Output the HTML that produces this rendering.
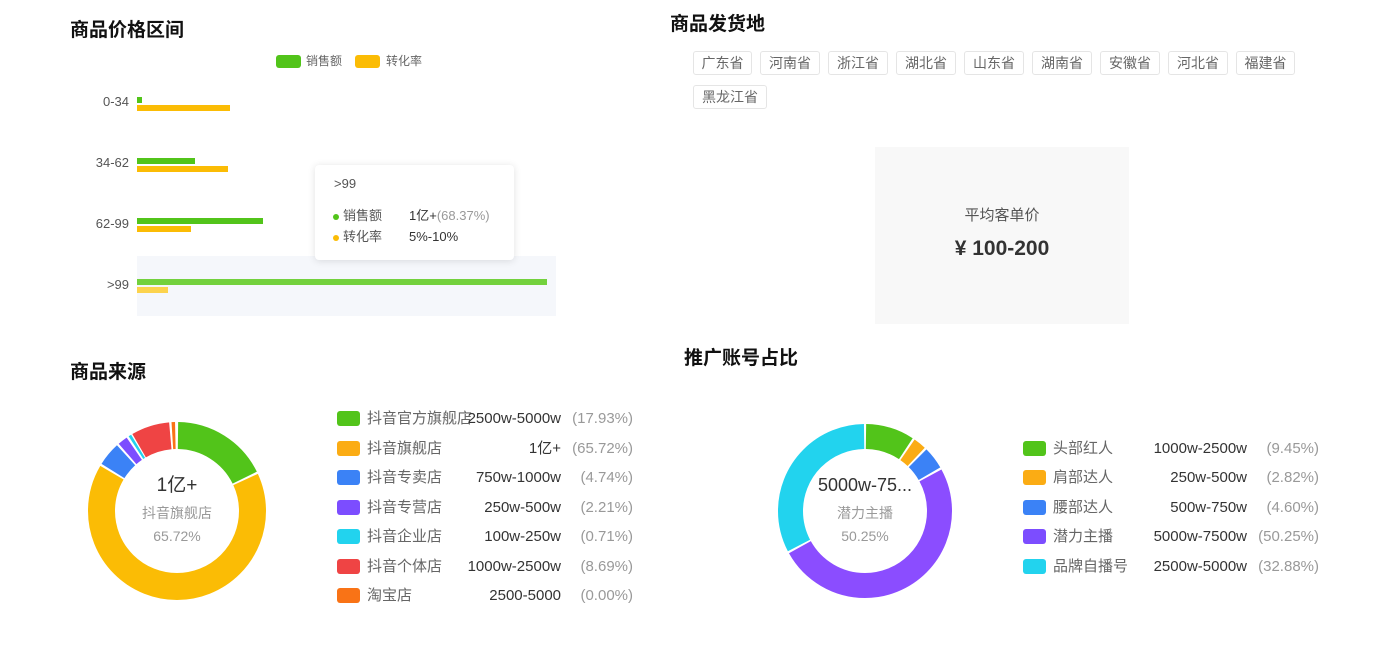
<!DOCTYPE html>
<html><head><meta charset="utf-8"><style>
body{margin:0;width:1382px;height:656px;background:#fff;font-family:"Liberation Sans","Noto Sans CJK SC",sans-serif;position:relative;overflow:hidden;color:#333}
.a{position:absolute;white-space:nowrap;line-height:20px}
.t{font-size:19px;font-weight:bold;color:#111;line-height:24px}
.tag{position:absolute;height:24px;line-height:22px;border:1px solid #e5e5e5;border-radius:3px;font-size:14px;color:#666;text-align:center;box-sizing:border-box}
.lab{font-size:13px;color:#555;text-align:right;width:60px}
.bar{position:absolute;height:6px}
.sw{position:absolute;width:23px;height:15px;border-radius:3px}
.ln,.lv,.lp{position:absolute;font-size:15px;line-height:20px;white-space:nowrap}
.ln{color:#666}
.lv{color:#333;text-align:right}
.lp{color:#999;text-align:right}
</style></head><body>
<div class="a t" style="left:70px;top:19px">商品价格区间</div>
<div class="a t" style="left:670px;top:13px">商品发货地</div>
<div class="a t" style="left:70px;top:361px">商品来源</div>
<div class="a t" style="left:684px;top:347px">推广账号占比</div>

<div class="a" style="left:276px;top:55px;width:25px;height:13px;background:#52c41a;border-radius:3px"></div>
<div class="a" style="left:306px;top:51px;font-size:12px;color:#666">销售额</div>
<div class="a" style="left:355px;top:55px;width:25px;height:13px;background:#fbbc05;border-radius:3px"></div>
<div class="a" style="left:386px;top:51px;font-size:12px;color:#666">转化率</div>

<div class="a" style="left:137px;top:256px;width:419px;height:60px;background:#f5f7fb"></div>
<div class="a lab" style="left:69px;top:92px">0-34</div>
<div class="a lab" style="left:69px;top:153px">34-62</div>
<div class="a lab" style="left:69px;top:214px">62-99</div>
<div class="a lab" style="left:69px;top:275px">&gt;99</div>
<div class="bar" style="left:137px;top:97px;width:5px;background:#52c41a"></div>
<div class="bar" style="left:137px;top:105px;width:93px;background:#fbbc05"></div>
<div class="bar" style="left:137px;top:158px;width:58px;background:#52c41a"></div>
<div class="bar" style="left:137px;top:166px;width:91px;background:#fbbc05"></div>
<div class="bar" style="left:137px;top:218px;width:126px;background:#52c41a"></div>
<div class="bar" style="left:137px;top:226px;width:54px;background:#fbbc05"></div>
<div class="bar" style="left:137px;top:279px;width:410px;background:#73d13d"></div>
<div class="bar" style="left:137px;top:287px;width:31px;background:#fcd34d"></div>

<div class="a" style="left:315px;top:165px;width:199px;height:95px;background:#fff;border-radius:4px;box-shadow:0 1px 8px rgba(0,0,0,.12)">
<div class="a" style="left:19px;top:9px;font-size:13px;color:#555">&gt;99</div>
<div class="a" style="left:18px;top:49px;width:6px;height:6px;border-radius:3px;background:#52c41a"></div>
<div class="a" style="left:28px;top:41px;font-size:13px;color:#555">销售额</div>
<div class="a" style="left:94px;top:41px;font-size:13px;color:#333">1亿+<span style="color:#999">(68.37%)</span></div>
<div class="a" style="left:18px;top:70px;width:6px;height:6px;border-radius:3px;background:#fbbc05"></div>
<div class="a" style="left:28px;top:62px;font-size:13px;color:#555">转化率</div>
<div class="a" style="left:94px;top:62px;font-size:13px;color:#333">5%-10%</div>
</div>

<div class="tag" style="left:693px;top:51px;width:59px">广东省</div>
<div class="tag" style="left:760px;top:51px;width:60px">河南省</div>
<div class="tag" style="left:828px;top:51px;width:60px">浙江省</div>
<div class="tag" style="left:896px;top:51px;width:60px">湖北省</div>
<div class="tag" style="left:964px;top:51px;width:60px">山东省</div>
<div class="tag" style="left:1032px;top:51px;width:60px">湖南省</div>
<div class="tag" style="left:1100px;top:51px;width:60px">安徽省</div>
<div class="tag" style="left:1168px;top:51px;width:60px">河北省</div>
<div class="tag" style="left:1236px;top:51px;width:59px">福建省</div>
<div class="tag" style="left:693px;top:85px;width:74px">黑龙江省</div>

<div class="a" style="left:875px;top:147px;width:254px;height:177px;background:#f8f8f8"></div>
<div class="a" style="left:875px;top:206px;width:254px;text-align:center;font-size:15px;color:#555">平均客单价</div>
<div class="a" style="left:875px;top:239px;width:254px;text-align:center;font-size:21px;font-weight:bold;color:#333">¥ 100-200</div>

<svg class="a" style="left:0;top:0" width="1382" height="656">
<g transform="rotate(-90 177 511)" fill="none" stroke-width="27">
<circle cx="177" cy="511" r="75.5" stroke="#52c41a" stroke-dasharray="83 1000" stroke-dashoffset="-1"/>
<circle cx="177" cy="511" r="75.5" stroke="#fbbc05" stroke-dasharray="309.8 1000" stroke-dashoffset="-86"/>
<circle cx="177" cy="511" r="75.5" stroke="#3b82f6" stroke-dasharray="20.5 1000" stroke-dashoffset="-397.8"/>
<circle cx="177" cy="511" r="75.5" stroke="#7c4dff" stroke-dasharray="8.5 1000" stroke-dashoffset="-420.3"/>
<circle cx="177" cy="511" r="75.5" stroke="#22d3ee" stroke-dasharray="2.5 1000" stroke-dashoffset="-430.8"/>
<circle cx="177" cy="511" r="75.5" stroke="#ef4444" stroke-dasharray="33 1000" stroke-dashoffset="-434.5"/>
<circle cx="177" cy="511" r="75.5" stroke="#f97316" stroke-dasharray="3 1000" stroke-dashoffset="-469.5"/>
</g>
<g transform="rotate(-90 865 511)" fill="none" stroke-width="25">
<circle cx="865" cy="511" r="74.5" stroke="#52c41a" stroke-dasharray="42.2 1000" stroke-dashoffset="-1"/>
<circle cx="865" cy="511" r="74.5" stroke="#fbac14" stroke-dasharray="11.2 1000" stroke-dashoffset="-45.2"/>
<circle cx="865" cy="511" r="74.5" stroke="#3b82f6" stroke-dasharray="19.5 1000" stroke-dashoffset="-58.4"/>
<circle cx="865" cy="511" r="74.5" stroke="#8b4dff" stroke-dasharray="233.2 1000" stroke-dashoffset="-79.9"/>
<circle cx="865" cy="511" r="74.5" stroke="#22d3ee" stroke-dasharray="151.9 1000" stroke-dashoffset="-315.1"/>
</g>
</svg>
<div class="a" style="left:97px;top:476px;width:160px;text-align:center;font-size:19px;color:#333">1亿+</div>
<div class="a" style="left:97px;top:503px;width:160px;text-align:center;font-size:14px;color:#999">抖音旗舰店</div>
<div class="a" style="left:97px;top:526px;width:160px;text-align:center;font-size:14px;color:#999">65.72%</div>
<div class="a" style="left:785px;top:475px;width:160px;text-align:center;font-size:18px;color:#333">5000w-75...</div>
<div class="a" style="left:785px;top:503px;width:160px;text-align:center;font-size:14px;color:#999">潜力主播</div>
<div class="a" style="left:785px;top:526px;width:160px;text-align:center;font-size:14px;color:#999">50.25%</div>

<div class="sw" style="left:337px;top:411px;background:#52c41a"></div><div class="ln" style="left:367px;top:409px">抖音官方旗舰店</div><div class="lv" style="left:441px;top:409px;width:120px">2500w-5000w</div><div class="lp" style="left:553px;top:409px;width:80px">(17.93%)</div>
<div class="sw" style="left:337px;top:441px;background:#fbac14"></div><div class="ln" style="left:367px;top:439px">抖音旗舰店</div><div class="lv" style="left:441px;top:439px;width:120px">1亿+</div><div class="lp" style="left:553px;top:439px;width:80px">(65.72%)</div>
<div class="sw" style="left:337px;top:470px;background:#3b82f6"></div><div class="ln" style="left:367px;top:468px">抖音专卖店</div><div class="lv" style="left:441px;top:468px;width:120px">750w-1000w</div><div class="lp" style="left:553px;top:468px;width:80px">(4.74%)</div>
<div class="sw" style="left:337px;top:500px;background:#7c4dff"></div><div class="ln" style="left:367px;top:498px">抖音专营店</div><div class="lv" style="left:441px;top:498px;width:120px">250w-500w</div><div class="lp" style="left:553px;top:498px;width:80px">(2.21%)</div>
<div class="sw" style="left:337px;top:529px;background:#22d3ee"></div><div class="ln" style="left:367px;top:527px">抖音企业店</div><div class="lv" style="left:441px;top:527px;width:120px">100w-250w</div><div class="lp" style="left:553px;top:527px;width:80px">(0.71%)</div>
<div class="sw" style="left:337px;top:559px;background:#ef4444"></div><div class="ln" style="left:367px;top:557px">抖音个体店</div><div class="lv" style="left:441px;top:557px;width:120px">1000w-2500w</div><div class="lp" style="left:553px;top:557px;width:80px">(8.69%)</div>
<div class="sw" style="left:337px;top:588px;background:#f97316"></div><div class="ln" style="left:367px;top:586px">淘宝店</div><div class="lv" style="left:441px;top:586px;width:120px">2500-5000</div><div class="lp" style="left:553px;top:586px;width:80px">(0.00%)</div>

<div class="sw" style="left:1023px;top:441px;background:#52c41a"></div><div class="ln" style="left:1053px;top:439px">头部红人</div><div class="lv" style="left:1127px;top:439px;width:120px">1000w-2500w</div><div class="lp" style="left:1239px;top:439px;width:80px">(9.45%)</div>
<div class="sw" style="left:1023px;top:470px;background:#fbac14"></div><div class="ln" style="left:1053px;top:468px">肩部达人</div><div class="lv" style="left:1127px;top:468px;width:120px">250w-500w</div><div class="lp" style="left:1239px;top:468px;width:80px">(2.82%)</div>
<div class="sw" style="left:1023px;top:500px;background:#3b82f6"></div><div class="ln" style="left:1053px;top:498px">腰部达人</div><div class="lv" style="left:1127px;top:498px;width:120px">500w-750w</div><div class="lp" style="left:1239px;top:498px;width:80px">(4.60%)</div>
<div class="sw" style="left:1023px;top:529px;background:#7c4dff"></div><div class="ln" style="left:1053px;top:527px">潜力主播</div><div class="lv" style="left:1127px;top:527px;width:120px">5000w-7500w</div><div class="lp" style="left:1239px;top:527px;width:80px">(50.25%)</div>
<div class="sw" style="left:1023px;top:559px;background:#22d3ee"></div><div class="ln" style="left:1053px;top:557px">品牌自播号</div><div class="lv" style="left:1127px;top:557px;width:120px">2500w-5000w</div><div class="lp" style="left:1239px;top:557px;width:80px">(32.88%)</div>
</body></html>
